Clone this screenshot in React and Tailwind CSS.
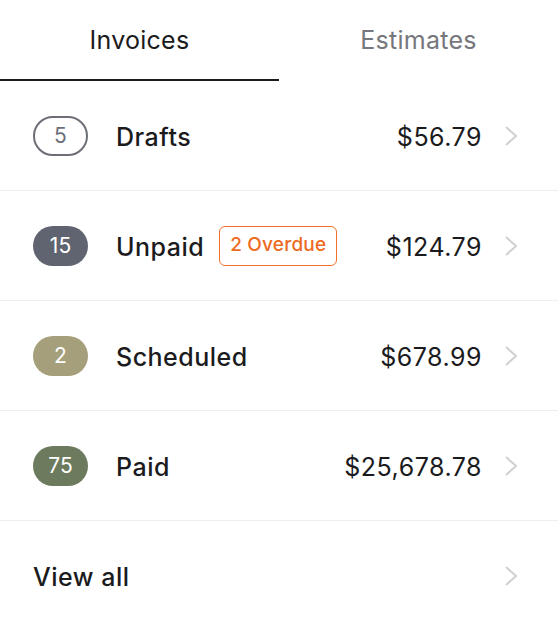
import React, { useState } from "react";

const rows = [
  { count: "5", label: "Drafts", amount: "$56.79", badge: "border-2 border-[#6c6f77] text-[#6c6f77]" },
  { count: "15", label: "Unpaid", amount: "$124.79", badge: "bg-[#5f6470] text-white", overdue: "2 Overdue" },
  { count: "2", label: "Scheduled", amount: "$678.99", badge: "bg-[#a59f7b] text-white" },
  { count: "75", label: "Paid", amount: "$25,678.78", badge: "bg-[#6c7a5e] text-white" },
];

function Chevron() {
  return (
    <svg width="14" height="22" viewBox="0 0 14 22" fill="none" className="shrink-0">
      <polyline points="2,2 12,11 2,20" stroke="#d0d0d0" strokeWidth="2" />
    </svg>
  );
}

export default function App() {
  const [tab, setTab] = useState("invoices");

  return (
    <div className="w-[558px] h-[630px] overflow-hidden bg-white text-[#1b1b1d] font-['Inter','Liberation_Sans',sans-serif]">
      {/* Tabs */}
      <div className="grid grid-cols-2 h-[81px]">
        <button
          onClick={() => setTab("invoices")}
          className={`text-[25px] tracking-[0.01em] pt-[3px] border-b-2 ${
            tab === "invoices" ? "border-[#1b1b1d] text-[#1b1b1d]" : "border-transparent text-[#76777c]"
          }`}
        >
          Invoices
        </button>
        <button
          onClick={() => setTab("estimates")}
          className={`text-[25px] tracking-[0.01em] pt-[3px] border-b-2 ${
            tab === "estimates" ? "border-[#1b1b1d] text-[#1b1b1d]" : "border-transparent text-[#76777c]"
          }`}
        >
          Estimates
        </button>
      </div>

      {rows.map((r) => (
        <div key={r.label} className="flex items-center h-[110px] border-b border-[#eeeeee] pl-[33px] pr-[40px]">
          <span
            className={`flex items-center justify-center w-[55px] h-10 rounded-full text-[21px] ${r.badge}`}
          >
            {r.count}
          </span>
          <span className="ml-[28px] pt-1 text-[25px] tracking-[0.02em] font-medium">{r.label}</span>
          {r.overdue && (
            <span className="ml-[15px] flex items-center h-10 px-[10px] rounded-md border-[1.5px] border-[#f0702a] text-[#ee6a1f] text-[19px] tracking-[0.01em] font-medium">
              {r.overdue}
            </span>
          )}
          <span className="ml-auto mr-[22px] pt-1 text-[25px] tracking-[0.02em]">{r.amount}</span>
          <Chevron />
        </div>
      ))}

      <div className="flex items-center h-[110px] pl-[33px] pr-[40px]">
        <span className="pt-1 text-[25px] tracking-[0.02em] font-medium">View all</span>
        <span className="ml-auto">
          <Chevron />
        </span>
      </div>
    </div>
  );
}
